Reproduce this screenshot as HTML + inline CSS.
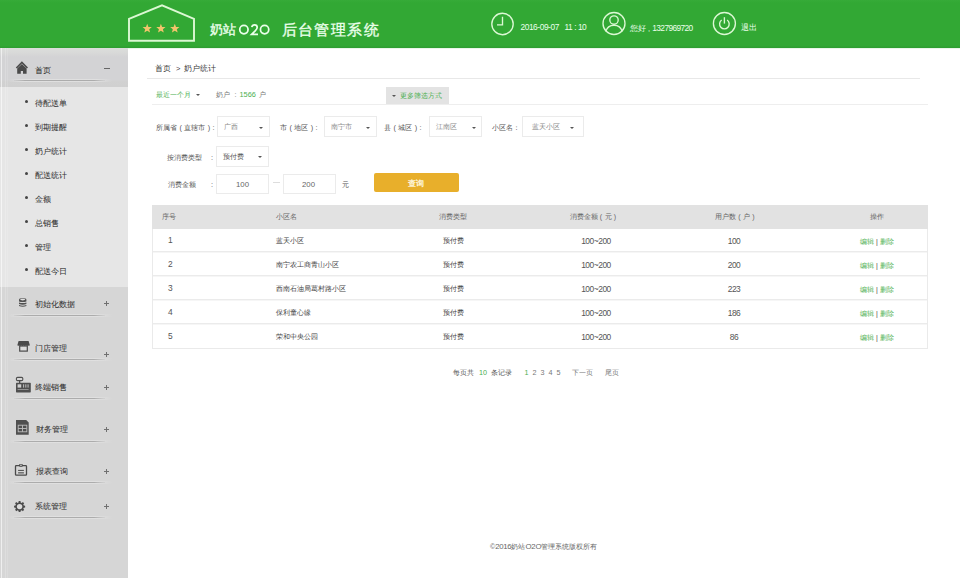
<!DOCTYPE html>
<html><head><meta charset="utf-8">
<style>
*{margin:0;padding:0;box-sizing:border-box}
html,body{width:960px;height:578px;overflow:hidden;background:#fff;font-family:"Liberation Sans",sans-serif;color:#555}
.a{position:absolute;white-space:nowrap}
#hd{position:absolute;left:0;top:0;width:960px;height:48px;background:linear-gradient(#36ab38 0,#32a834 3px,#32a834 46px,#2e9f31 47px,#2e9f31 48px)}
.ht{color:#eaffea}
#sb{position:absolute;left:0;top:48px;width:128px;height:530px;background:#d6d6d6}
.sl{position:absolute;height:3px;left:8px;width:104px;background:linear-gradient(to right,rgba(225,225,225,0),rgba(225,225,225,.9) 15%,rgba(225,225,225,.9) 85%,rgba(225,225,225,0))}.sl:before{content:"";position:absolute;left:6px;right:7px;top:1px;height:1px;background:linear-gradient(to right,rgba(176,176,176,.2),rgba(172,172,172,1) 12%,rgba(172,172,172,1) 88%,rgba(176,176,176,.2))}
.bul{position:absolute;width:3px;height:3px;background:#444;left:24.7px;border-radius:50%}
.mi{font-size:7.6px;color:#333;left:35px;-webkit-text-stroke:0.05px #333}
.gt{font-size:7.7px;color:#333;left:35px;-webkit-text-stroke:0.05px #333}
.pls{position:absolute;left:104px;width:5px;height:5px;background:linear-gradient(#707070,#707070) center/5px 1px no-repeat,linear-gradient(#707070,#707070) center/1px 5px no-repeat}
.lbl{font-size:7.3px;color:#555}
.sel{position:absolute;border:1px solid #ebebeb;background:#fff}
.sel span{position:absolute;font-size:7.3px;color:#8a8a8a}
.car{position:absolute;width:0;height:0;border-left:2.3px solid transparent;border-right:2.3px solid transparent;border-top:2.6px solid #555}
.th{font-size:7px;color:#666}
.td{font-size:7px;color:#444}.num{font-size:8.4px;letter-spacing:-0.45px;color:#555}
.g{color:#4caf50}
</style></head><body>
<div id="hd">
  <svg class="a" style="left:0;top:0" width="400" height="48">
    <polygon points="129,18.8 162,5.4 194,18.8 194,40.8 129,40.8" fill="none" stroke="#dcf8d4" stroke-width="1.9"/>
    <g fill="#f2c46c">
      <polygon id="st" points="147.20,23.70 148.43,26.90 151.86,27.09 149.20,29.25 150.08,32.56 147.20,30.70 144.32,32.56 145.20,29.25 142.54,27.09 145.97,26.90"/>
      <use href="#st" x="13.7"/>
      <use href="#st" x="27.6"/>
    </g>
  </svg>
  <div class="a ht" style="left:209.8px;top:20.1px;font-size:13.3px;line-height:20px;letter-spacing:0.2px;-webkit-text-stroke:0.35px #eaffea">奶站</div>
  <svg class="a" style="left:236px;top:18px" width="40" height="22"><g fill="none" stroke="#eaffea" stroke-width="1.75"><circle cx="7.9" cy="11.6" r="4.15"/><circle cx="28.6" cy="11.6" r="4.15"/><path d="M15.8,9.2 Q16.2,6.8 18.5,6.8 Q21.2,6.8 21.2,9.3 Q21.2,11 19.2,12.9 L15.6,16.4 L22,16.4"/></g></svg>
  <div class="a ht" style="left:281.5px;top:19.5px;font-size:15px;line-height:20px;letter-spacing:1.45px;-webkit-text-stroke:0.35px #eaffea">后台管理系统</div>
  <svg class="a" style="left:480px;top:0" width="300" height="48">
    <g fill="none" stroke="#dcf8d4" stroke-width="1.35">
      <circle cx="22.5" cy="24" r="10.7"/>
      <polyline points="22.5,16.8 22.5,24.8 17,24.8"/>
      <circle cx="134" cy="23.5" r="11"/>
      <circle cx="134" cy="20" r="4.2"/>
      <path d="M125.8,31.5 Q127.5,25.2 134,25.2 Q140.5,25.2 142.2,31.5"/>
      <circle cx="244.4" cy="23.5" r="11"/>
      <path d="M247.15,20.07 A4.8,4.8 0 1 1 241.65,20.07"/>
      <line x1="244.4" y1="17.2" x2="244.4" y2="23.6"/>
    </g>
  </svg>
  <div class="a ht" style="left:520.5px;top:22px;font-size:8.4px;line-height:10px;letter-spacing:-0.45px">2016-09-07&nbsp;&nbsp;&nbsp;11 : 10</div>
  <div class="a ht" style="left:630px;top:22.5px;font-size:7.5px;line-height:10px">您好 , <span style="font-size:8.4px;letter-spacing:-0.62px">1327969720</span></div>
  <div class="a ht" style="left:741px;top:23px;font-size:7.5px;line-height:10px">退出</div>
</div>

<div id="sb">
  <div class="a" style="left:0;top:0;width:128px;height:38.5px;background:linear-gradient(#dcdedc 0,#d8d9d8 5px,#d3d3d5 9px,#d3d3d5 32px,#d1d1d1 33px,#d0d0d0 100%)"></div>
  <div class="a" style="left:0;top:38.5px;width:128px;height:200px;background:#e6e6e6"></div>
  <div class="a" style="left:1px;top:0;width:1px;height:530px;background:rgba(255,255,255,.6)"></div>
  <div class="a" style="left:4.5px;top:0;width:1px;height:530px;background:rgba(255,255,255,.2)"></div>
  <div class="a" style="left:6.5px;top:0;width:1px;height:530px;background:rgba(255,255,255,.12)"></div>
</div>
<!-- sidebar content in page coords -->
<svg class="a" style="left:0;top:0" width="128" height="578">
 <g fill="#4a4a4a">
  <path d="M21.9,61.2 L15.8,67.4 L16.9,68.5 L21.9,63.6 L26.9,68.5 L28,67.4 Z"/>
  <path d="M17.2,68.6 L21.9,64.1 L26.6,68.6 L26.6,73.7 L23,73.7 L23,71 L20.8,71 L20.8,73.7 L17.2,73.7 Z"/>
 </g>
 <g fill="#505050">
  <path d="M19,299.7 Q19,298.3 22.7,298.3 Q26.4,298.3 26.4,299.7 L26.4,301.4 Q22.7,302.8 19,301.4Z"/>
  <path d="M19,302.4 Q22.7,303.8 26.4,302.4 L26.4,304 Q22.7,305.4 19,304Z"/>
  <path d="M19,305 Q22.7,306.4 26.4,305 L26.4,306 Q22.7,307.3 19,306Z"/>
 </g>
 <ellipse cx="22.7" cy="299.6" rx="2.6" ry="0.8" fill="#e0e0e0"/>
 <g fill="#4a4a4a">
  <path d="M18.6,341 L28.6,341 L29.8,345 Q29.2,346.3 28.2,345.6 Q27.1,346.4 26,345.6 Q24.8,346.4 23.6,345.6 Q22.4,346.4 21.2,345.6 Q20,346.4 19,345.6 Q18,346.3 17.4,345 Z"/>
 </g>
 <rect x="19.7" y="346" width="7.6" height="5.1" fill="#dcdcdc" stroke="#4a4a4a" stroke-width="1.2"/>
 <g fill="#4f4f4f">
  <rect x="16.4" y="377.4" width="6.4" height="3.2" rx="1.2" fill="none" stroke="#4f4f4f" stroke-width="1.1"/>
  <rect x="19" y="380.5" width="1.3" height="2.6"/>
  <rect x="16" y="382.8" width="14.8" height="9.6" rx="0.6"/>
 </g>
 <g fill="#cfcfcf">
  <rect x="17.6" y="384.3" width="3.6" height="3.3"/>
  <rect x="23.2" y="384.3" width="0.9" height="3.3"/>
  <rect x="25.4" y="384.3" width="0.9" height="3.3"/>
  <rect x="27.6" y="384.3" width="0.9" height="3.3"/>
  <rect x="17.6" y="389" width="11" height="0.9" fill="#9a9a9a"/>
 </g>
 <path d="M16,420 L26.2,420 L28.7,422.5 L28.7,434.7 L16,434.7Z" fill="#4f4f4f"/>
 <g fill="none" stroke="#bdbdbd" stroke-width="0.9">
  <rect x="18.2" y="425.2" width="8.6" height="6.6"/>
  <line x1="22.5" y1="425.2" x2="22.5" y2="431.8"/>
  <line x1="18.2" y1="428.5" x2="26.8" y2="428.5"/>
 </g>
 <rect x="15.5" y="465.6" width="11" height="9.6" rx="0.8" fill="none" stroke="#4a4a4a" stroke-width="1.3"/>
 <rect x="19" y="463.9" width="3.9" height="2.8" rx="1.2" fill="#4a4a4a"/>
 <rect x="20" y="464.7" width="1.9" height="1" fill="#d6d6d6"/>
 <g fill="#4a4a4a"><rect x="18.1" y="469.9" width="5.8" height="1"/><rect x="18.1" y="472.3" width="5.8" height="1.1"/></g>
 <polygon fill="#4a4a4a" points="18.55,502.43 18.68,501.08 20.52,501.08 20.65,502.43 21.80,502.91 22.86,502.04 24.16,503.34 23.29,504.40 23.77,505.55 25.12,505.68 25.12,507.52 23.77,507.65 23.29,508.80 24.16,509.86 22.86,511.16 21.80,510.29 20.65,510.77 20.52,512.12 18.68,512.12 18.55,510.77 17.40,510.29 16.34,511.16 15.04,509.86 15.91,508.80 15.43,507.65 14.08,507.52 14.08,505.68 15.43,505.55 15.91,504.40 15.04,503.34 16.34,502.04 17.40,502.91"/>
 <circle cx="19.6" cy="506.6" r="2.7" fill="#dadada"/>
</svg>
<div class="a gt" style="top:64.8px;line-height:12px">首页</div>
<div class="a" style="left:104px;top:68px;width:6px;height:1.2px;background:#666"></div>
<div class="sl" style="top:79px"></div>

<div class="bul" style="top:100px"></div><div class="a mi" style="top:97.5px;line-height:12px">待配送单</div>
<div class="bul" style="top:124px"></div><div class="a mi" style="top:121.5px;line-height:12px">到期提醒</div>
<div class="bul" style="top:148px"></div><div class="a mi" style="top:145.5px;line-height:12px">奶户统计</div>
<div class="bul" style="top:172px"></div><div class="a mi" style="top:169.5px;line-height:12px">配送统计</div>
<div class="bul" style="top:196px"></div><div class="a mi" style="top:193.5px;line-height:12px">金额</div>
<div class="bul" style="top:220px"></div><div class="a mi" style="top:217.5px;line-height:12px">总销售</div>
<div class="bul" style="top:244px"></div><div class="a mi" style="top:241.5px;line-height:12px">管理</div>
<div class="bul" style="top:268px"></div><div class="a mi" style="top:265.5px;line-height:12px">配送今日</div>

<!-- groups -->
<div class="a gt" style="top:299.1px;line-height:12px">初始化数据</div>
<div class="pls" style="top:301px"></div>
<div class="sl" style="top:314px"></div>

<div class="a gt" style="top:342.7px;line-height:12px">门店管理</div>
<div class="pls" style="top:352px"></div>
<div class="sl" style="top:358px"></div>

<div class="a gt" style="top:382.3px;line-height:12px">终端销售</div>
<div class="pls" style="top:384.5px"></div>
<div class="sl" style="top:397px"></div>

<div class="a gt" style="top:424.2px;line-height:12px;left:35.8px">财务管理</div>
<div class="pls" style="top:427.2px"></div>
<div class="sl" style="top:440px"></div>

<div class="a gt" style="top:466px;line-height:12px;left:35.8px">报表查询</div>
<div class="pls" style="top:469px"></div>
<div class="sl" style="top:481px"></div>

<div class="a gt" style="top:501.3px;line-height:12px">系统管理</div>
<div class="pls" style="top:503.5px"></div>
<div class="sl" style="top:516px"></div>

<!-- content -->
<div class="a" style="left:155px;top:63.2px;font-size:7.5px;line-height:12px;color:#3a3a3a">首页</div>
<div class="a" style="left:176px;top:63.2px;font-size:7.5px;line-height:12px;color:#3a3a3a">&gt;</div>
<div class="a" style="left:184px;top:63.2px;font-size:7.5px;line-height:12px;color:#3a3a3a;letter-spacing:0.1px">奶户统计</div>
<div class="a" style="left:128px;top:48px;width:832px;height:1px;background:#e9f6e9"></div>
<div class="a" style="left:147px;top:78px;width:773px;height:1px;background:#e8e8e8"></div>
<div class="a g" style="left:155.5px;top:89px;font-size:7px;line-height:12px">最近一个月</div>
<div class="car" style="left:196px;top:94px;border-left-width:2px;border-right-width:2px;border-top-width:2.5px"></div>
<div class="a" style="left:216px;top:89px;font-size:7px;line-height:12px;color:#777">奶户</div>
<div class="a" style="left:234.5px;top:89px;font-size:7px;line-height:12px;color:#777">:</div>
<div class="a g" style="left:239.5px;top:89px;font-size:7.4px;line-height:12px">1566</div>
<div class="a" style="left:259px;top:89px;font-size:7px;line-height:12px;color:#777">户</div>
<div class="a" style="left:386px;top:87px;width:63px;height:17px;background:#e3e3e3"></div>
<div class="car" style="left:391.5px;top:95.2px;border-top-color:#555"></div>
<div class="a g" style="left:400px;top:90px;font-size:7.1px;line-height:12px">更多筛选方式</div>
<div class="a" style="left:152px;top:103.5px;width:776px;height:1px;background:#eeeeee"></div>

<div class="a lbl" style="left:156px;top:122px;line-height:12px">所属省<i style="display:inline-block;width:7.3px;text-align:center;font-style:normal">(</i>直辖市<i style="display:inline-block;width:7.3px;text-align:center;font-style:normal">)</i>:</div>
<div class="sel" style="left:217px;top:116px;width:53px;height:21px"><span style="left:6px;top:4px;line-height:12px">广西</span><i class="car" style="left:40.5px;top:10px"></i></div>
<div class="a lbl" style="left:280px;top:122px;line-height:12px">市<i style="display:inline-block;width:7.3px;text-align:center;font-style:normal">(</i>地区<i style="display:inline-block;width:7.3px;text-align:center;font-style:normal">)</i>:</div>
<div class="sel" style="left:324px;top:116px;width:53px;height:21px"><span style="left:6px;top:4px;line-height:12px">南宁市</span><i class="car" style="left:40.5px;top:10px"></i></div>
<div class="a lbl" style="left:384px;top:122px;line-height:12px">县<i style="display:inline-block;width:7.3px;text-align:center;font-style:normal">(</i>城区<i style="display:inline-block;width:7.3px;text-align:center;font-style:normal">)</i>:</div>
<div class="sel" style="left:429px;top:116px;width:53px;height:21px"><span style="left:6px;top:4px;line-height:12px">江南区</span><i class="car" style="left:42px;top:10px"></i></div>
<div class="a lbl" style="left:492px;top:122px;line-height:12px">小区名：</div>
<div class="sel" style="left:522px;top:116px;width:62px;height:21px"><span style="left:9px;top:4px;line-height:12px">蓝天小区</span><i class="car" style="left:47px;top:10px"></i></div>

<div class="a lbl" style="left:167px;top:151.5px;line-height:12px">按消费类型</div>
<div class="a lbl" style="left:211px;top:151.5px;line-height:12px">:</div>
<div class="sel" style="left:216px;top:146px;width:53px;height:20.5px"><span style="left:6px;top:4px;line-height:12px;color:#555">预付费</span><i class="car" style="left:41px;top:9px"></i></div>

<div class="a lbl" style="left:168px;top:179px;line-height:12px">消费金额</div>
<div class="a lbl" style="left:211px;top:179px;line-height:12px">:</div>
<div class="sel" style="left:216px;top:174px;width:53px;height:20px"><span style="left:0;width:51px;text-align:center;top:3.5px;line-height:12px;color:#666;font-size:7.8px">100</span></div>
<div class="a" style="left:272.5px;top:182px;width:7px;height:1px;background:#ddd"></div>
<div class="sel" style="left:283px;top:174px;width:53px;height:20px"><span style="left:-1px;width:51px;text-align:center;top:3.5px;line-height:12px;color:#666;font-size:7.8px">200</span></div>
<div class="a lbl" style="left:341.5px;top:179px;line-height:12px">元</div>
<div class="a" style="left:374px;top:173px;width:85px;height:19.3px;background:#e8af2b;border-radius:2px"></div>
<div class="a" style="left:374px;top:177px;width:85px;text-align:center;font-size:8.3px;line-height:12px;color:#fffbe8;-webkit-text-stroke:0.25px #fffbe8;letter-spacing:0.3px">查询</div>

<!-- table -->
<div class="a" style="left:152px;top:205px;width:776px;height:144px;border:1px solid #eaeaea;border-top:none"></div>
<div class="a" style="left:152px;top:205px;width:776px;height:24px;background:#e2e2e2"></div>
<div class="a" style="left:153px;top:251px;width:774px;height:2px;background:linear-gradient(#ebebeb 50%,#f6f6f6 50%)"></div>
<div class="a" style="left:153px;top:275px;width:774px;height:2px;background:linear-gradient(#ebebeb 50%,#f6f6f6 50%)"></div>
<div class="a" style="left:153px;top:299px;width:774px;height:2px;background:linear-gradient(#ebebeb 50%,#f6f6f6 50%)"></div>
<div class="a" style="left:153px;top:323px;width:774px;height:2px;background:linear-gradient(#ebebeb 50%,#f6f6f6 50%)"></div>

<div class="a th" style="left:162px;top:211px;line-height:12px">序号</div>
<div class="a th" style="left:276px;top:211px;line-height:12px">小区名</div>
<div class="a th" style="left:403px;width:100px;text-align:center;top:211px;line-height:12px">消费类型</div>
<div class="a th" style="left:544px;width:100px;text-align:center;top:211px;line-height:12px">消费金额<i style="display:inline-block;width:7px;text-align:center;font-style:normal">(</i>元<i style="display:inline-block;width:7px;text-align:center;font-style:normal">)</i></div>
<div class="a th" style="left:686px;width:100px;text-align:center;top:211px;line-height:12px">用户数<i style="display:inline-block;width:7px;text-align:center;font-style:normal">(</i>户<i style="display:inline-block;width:7px;text-align:center;font-style:normal">)</i></div>
<div class="a th" style="left:827px;width:100px;text-align:center;top:211px;line-height:12px">操作</div>

<div id="rows"></div>
<div class="a td num" style="left:168px;top:233.7px;line-height:12px">1</div>
<div class="a td" style="left:276px;top:235px;line-height:12px">蓝天小区</div>
<div class="a td" style="left:403px;width:100px;text-align:center;top:235px;line-height:12px">预付费</div>
<div class="a td num" style="left:546px;width:100px;text-align:center;top:235.2px;line-height:12px">100~200</div>
<div class="a td num" style="left:684px;width:100px;text-align:center;top:235.2px;line-height:12px">100</div>
<div class="a td g" style="left:827px;width:100px;text-align:center;top:235.7px;line-height:12px">编辑 <span style="color:#444">|</span> 删除</div>

<div class="a td num" style="left:168px;top:257.7px;line-height:12px">2</div>
<div class="a td" style="left:276px;top:259px;line-height:12px">南宁农工商青山小区</div>
<div class="a td" style="left:403px;width:100px;text-align:center;top:259px;line-height:12px">预付费</div>
<div class="a td num" style="left:546px;width:100px;text-align:center;top:259.2px;line-height:12px">100~200</div>
<div class="a td num" style="left:684px;width:100px;text-align:center;top:259.2px;line-height:12px">200</div>
<div class="a td g" style="left:827px;width:100px;text-align:center;top:259.7px;line-height:12px">编辑 <span style="color:#444">|</span> 删除</div>

<div class="a td num" style="left:168px;top:281.7px;line-height:12px">3</div>
<div class="a td" style="left:276px;top:283px;line-height:12px">西南石油局葛村路小区</div>
<div class="a td" style="left:403px;width:100px;text-align:center;top:283px;line-height:12px">预付费</div>
<div class="a td num" style="left:546px;width:100px;text-align:center;top:283.2px;line-height:12px">100~200</div>
<div class="a td num" style="left:684px;width:100px;text-align:center;top:283.2px;line-height:12px">223</div>
<div class="a td g" style="left:827px;width:100px;text-align:center;top:283.7px;line-height:12px">编辑 <span style="color:#444">|</span> 删除</div>

<div class="a td num" style="left:168px;top:305.7px;line-height:12px">4</div>
<div class="a td" style="left:276px;top:307px;line-height:12px">保利童心缘</div>
<div class="a td" style="left:403px;width:100px;text-align:center;top:307px;line-height:12px">预付费</div>
<div class="a td num" style="left:546px;width:100px;text-align:center;top:307.2px;line-height:12px">100~200</div>
<div class="a td num" style="left:684px;width:100px;text-align:center;top:307.2px;line-height:12px">186</div>
<div class="a td g" style="left:827px;width:100px;text-align:center;top:307.7px;line-height:12px">编辑 <span style="color:#444">|</span> 删除</div>

<div class="a td num" style="left:168px;top:329.7px;line-height:12px">5</div>
<div class="a td" style="left:276px;top:331px;line-height:12px">荣和中央公园</div>
<div class="a td" style="left:403px;width:100px;text-align:center;top:331px;line-height:12px">预付费</div>
<div class="a td num" style="left:546px;width:100px;text-align:center;top:331.2px;line-height:12px">100~200</div>
<div class="a td num" style="left:684px;width:100px;text-align:center;top:331.2px;line-height:12px">86</div>
<div class="a td g" style="left:827px;width:100px;text-align:center;top:331.7px;line-height:12px">编辑 <span style="color:#444">|</span> 删除</div>

<!-- pagination -->
<div class="a" style="left:453px;top:367px;font-size:7px;line-height:12px;color:#555">每页共</div>
<div class="a g" style="left:479px;top:367px;font-size:7.2px;line-height:12px">10</div>
<div class="a" style="left:491px;top:367px;font-size:7px;line-height:12px;color:#555">条记录</div>
<div class="a" style="left:524.5px;top:367px;font-size:7.2px;line-height:12px;color:#777;word-spacing:2px"><span class="g">1</span> 2 3 4 5</div>
<div class="a" style="left:571.5px;top:367px;font-size:7px;line-height:12px;color:#777">下一页</div>
<div class="a" style="left:604.5px;top:367px;font-size:7px;line-height:12px;color:#777">尾页</div>

<div class="a" style="left:490px;top:540.5px;font-size:7.1px;line-height:12px;color:#666">©<span style="font-size:7.8px;letter-spacing:-0.3px">2016</span>奶站<span style="font-size:7.8px;letter-spacing:-0.2px">O2O</span>管理系统版权所有</div>
</body></html>
